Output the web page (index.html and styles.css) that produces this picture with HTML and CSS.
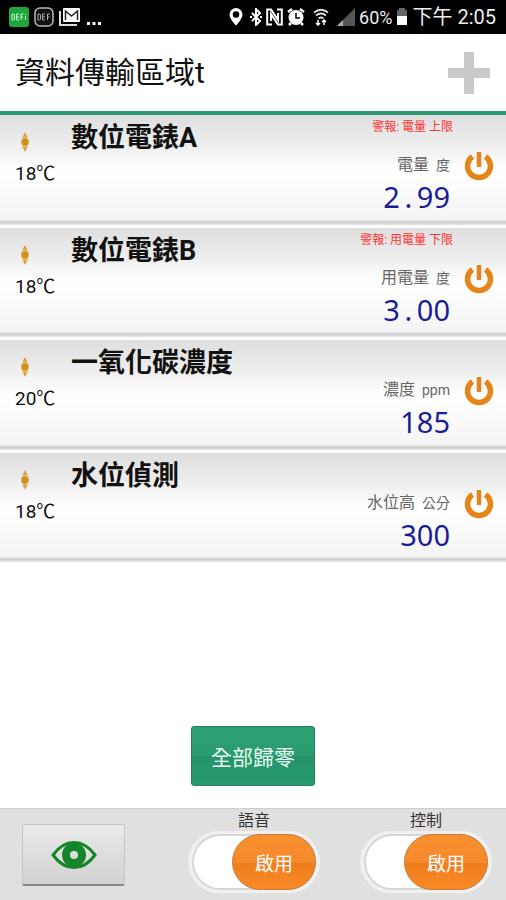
FILE: index.html
```html
<!DOCTYPE html>
<html lang="zh-Hant">
<head>
<meta charset="utf-8">
<meta name="viewport" content="width=device-width, initial-scale=1">
<title>資料傳輸區域t</title>
<link rel="stylesheet" href="styles.css">
</head>
<body>
<svg hidden>
  <symbol id="power" viewBox="0 0 30 30">
    <path d="M8.500 5.500A11.500 11.500 0 1 0 21.500 5.500" fill="none" stroke="#e58419" stroke-width="5.500"/>
    <path d="M15 1v15" stroke="#e58419" stroke-width="4.500"/>
  </symbol>
  <symbol id="node" viewBox="0 0 8 20">
    <path d="M4 0l3 6H1zM4 20l3-6H1z" fill="#d9a441"/>
    <ellipse cx="4" cy="10" rx="3.800" ry="4" fill="#cf9420"/>
    <path d="M1 5.500h6M1 14.500h6" stroke="#e6c27a"/>
  </symbol>
</svg>

<div class="status">
  <div class="status-side apps">
    <svg width="20" height="20" viewBox="0 0 20 20"><rect width="20" height="20" rx="3" fill="#1fa63c"/><path d="M3 7v6h1.500l1-1V8l-1-1zM10 7H7.500v6H10M7.500 10H10M14.500 7H12v6M12 10h2M16.500 9v4M16.500 7v1" fill="none" stroke="#c9f5cf"/></svg>
    <svg width="20" height="20" viewBox="0 0 20 20"><rect x="1" y="1" width="18" height="18" rx="5" fill="#111" stroke="#bbb" stroke-width="1.500"/><path d="M4 7v6h1.500l1-1V8l-1-1zM11 7H8.500v6H11M8.500 10H11M16 7h-2.500v6M13.500 10h2" fill="none" stroke="#aaa"/></svg>
    <svg width="22" height="20" viewBox="0 0 22 20"><path d="M1 4v14h17" fill="none" stroke="#ddd" stroke-width="2"/><rect x="4" y="1" width="17" height="14" rx="1" fill="#fff"/><path d="M6.500 13V4l6 5 6-5v9" fill="none" stroke="#222" stroke-width="1.500"/></svg>
    <svg width="16" height="20" viewBox="0 0 16 20"><path d="M1 15h3v3H1zM6.500 15h3v3h-3zM12 15h3v3h-3z" fill="#fff"/></svg>
  </div>
  <div class="status-side">
    <svg class="pin" width="14" height="18" viewBox="0 0 14 18"><path d="M7 0a6.500 6.500 0 0 0-6.500 6.500C.5 11 7 17.500 7 17.500S13.500 11 13.500 6.500A6.500 6.500 0 0 0 7 0zm0 3.200a3.200 3.200 0 1 1 0 6.500 3.200 3.200 0 0 1 0-6.500z" fill="#fff" fill-rule="evenodd"/></svg>
    <svg width="12" height="18" viewBox="0 0 12 18"><path d="M2 5l8 8-4 4V1l4 4-8 8" fill="none" stroke="#fff" stroke-width="2"/><path d="M0 8h2v2H0zM10 8h2v2h-2z" fill="#fff"/></svg>
    <svg width="17" height="18" viewBox="0 0 17 18"><path d="M6 16.500H1.200V1.500H5L12 12V5M11 1.500h4.800v15H12L5 6v7" fill="none" stroke="#fff" stroke-width="2"/></svg>
    <svg width="18" height="18" viewBox="0 0 18 18"><circle cx="9" cy="9.500" r="7.500" fill="#fff"/><path d="M1 4l4-3M17 4l-4-3M4 15l-2 2M14 15l2 2" stroke="#fff" stroke-width="2.500"/><path d="M9 5v5h4" fill="none" stroke="#000" stroke-width="1.500"/></svg>
    <svg class="wifi" width="16" height="18" viewBox="0 0 16 18"><path d="M1 4.500Q8-1 15 4.500M3 7.500Q8 3.500 13 7.500M5.500 10.500Q8 8.500 10.500 10.500" fill="none" stroke="#ddd" stroke-width="1.800"/><path d="M5 12v5M3 15l2 2 2-2M11 17v-5M9 14l2-2 2 2" fill="none" stroke="#fff" stroke-width="1.500"/></svg>
    <svg width="18" height="18" viewBox="0 0 18 18"><path d="M18 0v18H0z" fill="#555"/><path d="M6 12v6H0z" fill="#aaa"/></svg>
    <span class="charge">60%</span>
    <svg width="12" height="18" viewBox="0 0 12 18"><path d="M3 0h6v2h2v6H1V2h2z" fill="#666"/><path d="M1 8h10v9H1z" fill="#fff"/></svg>
    <span class="clock">下午 2:05</span>
  </div>
</div>

<header class="header">
  <h1>資料傳輸區域t</h1>
  <button class="add" type="button" aria-label="新增"><svg width="44" height="44" viewBox="0 0 44 44"><path d="M17 1h10v16h16v10H27v16H17V27H1V17h16z" fill="#c9c9c9"/></svg></button>
</header>

<main class="main">
  <ul class="list">
    <li class="row">
      <div class="node"><svg width="8" height="20"><use href="#node"/></svg><span>18℃</span></div>
      <h2>數位電錶A</h2>
      <div class="reading">
        <p class="alert">警報: 電量 上限</p>
        <p class="kind">電量 <small>度</small></p>
        <p class="value">2<span class="dot">.</span>99</p>
      </div>
      <button class="power" type="button" aria-label="電源"><svg width="30" height="30"><use href="#power"/></svg></button>
    </li>
    <li class="row">
      <div class="node"><svg width="8" height="20"><use href="#node"/></svg><span>18℃</span></div>
      <h2>數位電錶B</h2>
      <div class="reading">
        <p class="alert">警報: 用電量 下限</p>
        <p class="kind">用電量 <small>度</small></p>
        <p class="value">3<span class="dot">.</span>00</p>
      </div>
      <button class="power" type="button" aria-label="電源"><svg width="30" height="30"><use href="#power"/></svg></button>
    </li>
    <li class="row">
      <div class="node"><svg width="8" height="20"><use href="#node"/></svg><span>20℃</span></div>
      <h2>一氧化碳濃度</h2>
      <div class="reading">
        <p class="alert"></p>
        <p class="kind">濃度 <small>ppm</small></p>
        <p class="value">185</p>
      </div>
      <button class="power" type="button" aria-label="電源"><svg width="30" height="30"><use href="#power"/></svg></button>
    </li>
    <li class="row">
      <div class="node"><svg width="8" height="20"><use href="#node"/></svg><span>18℃</span></div>
      <h2>水位偵測</h2>
      <div class="reading">
        <p class="alert"></p>
        <p class="kind">水位高 <small>公分</small></p>
        <p class="value">300</p>
      </div>
      <button class="power" type="button" aria-label="電源"><svg width="30" height="30"><use href="#power"/></svg></button>
    </li>
  </ul>
  <button class="reset" type="button">全部歸零</button>
</main>

<footer class="footer">
  <button class="view" type="button" aria-label="檢視"><svg width="46" height="30" viewBox="0 0 46 30"><path d="M2 15Q11 2.500 23 2.500T44 15Q35 27.500 23 27.500T2 15z" fill="none" stroke="#14852a" stroke-width="3"/><circle cx="23" cy="15" r="8" fill="none" stroke="#14852a" stroke-width="8"/></svg></button>
  <div class="controls">
    <div class="control">
      <label for="voice">語音</label>
      <div class="switch"><input id="voice" type="checkbox" role="switch" checked><span class="thumb">啟用</span></div>
    </div>
    <div class="control">
      <label for="remote">控制</label>
      <div class="switch"><input id="remote" type="checkbox" role="switch" checked><span class="thumb">啟用</span></div>
    </div>
  </div>
</footer>
</body>
</html>
```
FILE: styles.css
```css
* { box-sizing: border-box; }

body {
  margin: 0;
  min-height: 100vh;
  display: flex;
  flex-direction: column;
  background: #fff;
  color: #111;
  font-family: Roboto, "Noto Sans CJK TC", sans-serif;
}

h1, h2, p, ul { margin: 0; padding: 0; }
button { font: inherit; padding: 0; border: 0; background: none; cursor: pointer; }
svg { display: block; flex: none; }
svg[hidden] { display: none; }

.status {
  height: 34px;
  padding: 0 10px 0 9px;
  display: flex;
  justify-content: space-between;
  align-items: center;
  background: #000;
  color: #eee;
}
.status-side { display: flex; align-items: center; gap: 4px; }
.apps { gap: 5px; }
.pin { margin-right: 3px; }
.wifi { margin: 0 4px; }
.charge { font-size: 18px; }
.clock { font-size: 20px; line-height: 24px; }

.header {
  height: 81px;
  padding: 0 15px;
  display: flex;
  justify-content: space-between;
  align-items: center;
  border-bottom: 4px solid #2e9870;
}
h1 { font-size: 30px; line-height: 40px; font-weight: 400; }

.main {
  flex: 1;
  display: flex;
  flex-direction: column;
  align-items: center;
  justify-content: space-between;
  padding-bottom: 22px;
}

.list {
  width: 100%;
  min-height: 450px;
  display: grid;
  grid-auto-rows: 1fr;
  list-style: none;
}
.row {
  display: grid;
  grid-template-columns: 56px 1fr auto 30px;
  padding: 4px 12px 6px 15px;
  background:
    linear-gradient(#e8e8e8, #cdcdcd, #e8e8e8) 0 calc(100% - 3px) / 100% 5px no-repeat,
    linear-gradient(#fff, #fff) 0 100% / 100% 3px no-repeat,
    linear-gradient(#dedede, #f0f0f0 30%, #fff 48%, #fafafa 70%, #f3f3f3 95%);
}
.node {
  display: flex;
  flex-direction: column;
  gap: 10px;
  padding-top: 13px;
  font-size: 19px;
  line-height: 24px;
}
.node svg { margin-left: 6px; }
h2 { font-size: 27px; line-height: 38px; font-weight: 700; }

.reading { text-align: right; padding-right: 14px; }
.alert { height: 16px; margin-right: -3px; font-size: 12px; line-height: 16px; color: #f33; }
.kind { margin-top: 18px; font-size: 16px; line-height: 24px; color: #666; }
.kind small { margin-left: 3px; font-size: 14px; }
.value {
  font-family: "Noto Sans", sans-serif;
  font-size: 29px;
  line-height: 40px;
  color: #1c1c96;
}
.dot { display: inline-block; width: 17px; text-align: center; }
.power { align-self: start; margin-top: 32px; }

.reset {
  width: 124px;
  height: 60px;
  border: 1px solid #24805b;
  border-radius: 3px;
  background: linear-gradient(#2b9f73, #2b9c70 50%, #25936a 50%, #289a6e);
  color: #e8fff2;
  font-size: 21px;
}

.footer {
  min-height: 92px;
  padding: 0 14px 0 22px;
  display: flex;
  justify-content: space-between;
  background: #e0e0e0;
  border-top: 1px solid #cecece;
}
.view {
  width: 103px;
  height: 62px;
  margin-top: 15px;
  display: grid;
  place-items: center;
  border: 1px solid #c6c6c6;
  border-bottom: 2px solid #888;
  border-radius: 2px;
  background: linear-gradient(#e9e9e9, #d2d2d2);
}
.controls { display: flex; gap: 40px; }
.control { display: flex; flex-direction: column; align-items: center; }
.control label { padding-top: 2px; font-size: 16px; line-height: 20px; color: #333; }
.switch {
  display: grid;
  width: 132px;
  height: 62px;
  padding: 3px 4px;
  border-radius: 31px;
  background: #f0f0f0;
}
.switch input {
  grid-area: 1 / 1;
  appearance: none;
  margin: 0;
  border: 2px solid #d6d6d6;
  border-radius: 28px;
  background: #fff;
}
.thumb {
  grid-area: 1 / 1;
  justify-self: end;
  width: 84px;
  display: grid;
  place-items: center;
  border: 1px solid #c77a35;
  border-radius: 28px;
  background: linear-gradient(#f98f2f, #f58a2c 52%, #ef7d1c 52%, #fa8a26);
  color: #fff;
  font-size: 19px;
  pointer-events: none;
}
input:not(:checked) + .thumb { justify-self: start; }
```
